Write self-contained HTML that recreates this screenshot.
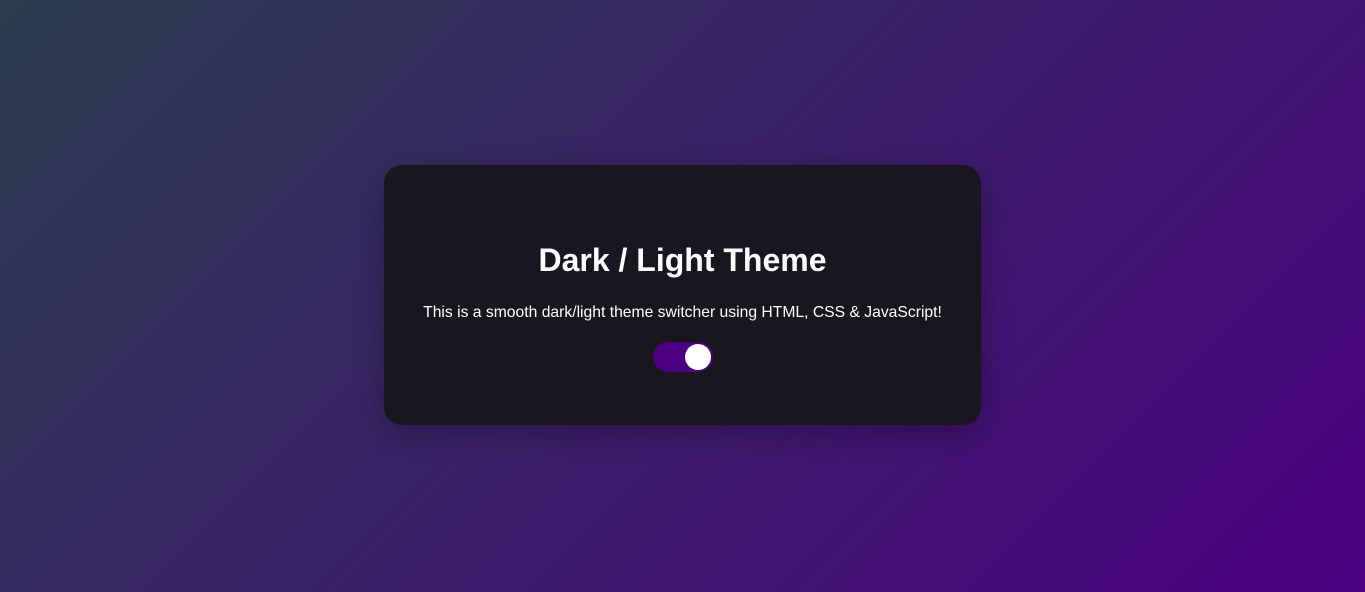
<!DOCTYPE html>
<html><head><style>
html,body{margin:0;height:100%;}
body{width:1365px;height:592px;background:linear-gradient(135deg,#2c3e50,#4b0082);font-family:"Liberation Sans",sans-serif;position:relative;overflow:hidden;}
.card{position:absolute;left:384px;top:165px;width:597px;height:260px;background:#1a161f;border-radius:18px;box-shadow:0 8px 30px rgba(0,0,0,.3);color:#fff;text-align:center;}
h1{margin:0;position:absolute;top:77px;width:100%;font-size:32px;font-weight:bold;}
p{margin:0;position:absolute;top:139px;width:100%;font-size:15.7px;}
.tog{position:absolute;left:269px;top:177px;width:60px;height:30px;border-radius:15px;background:#4b0082;}
.knob{position:absolute;left:32px;top:2px;width:26px;height:26px;border-radius:50%;background:#fff;}
</style></head><body>
<div class="card">
<h1>Dark / Light Theme</h1>
<p>This is a smooth dark/light theme switcher using HTML, CSS &amp; JavaScript!</p>
<div class="tog"><div class="knob"></div></div>
</div>
</body></html>
